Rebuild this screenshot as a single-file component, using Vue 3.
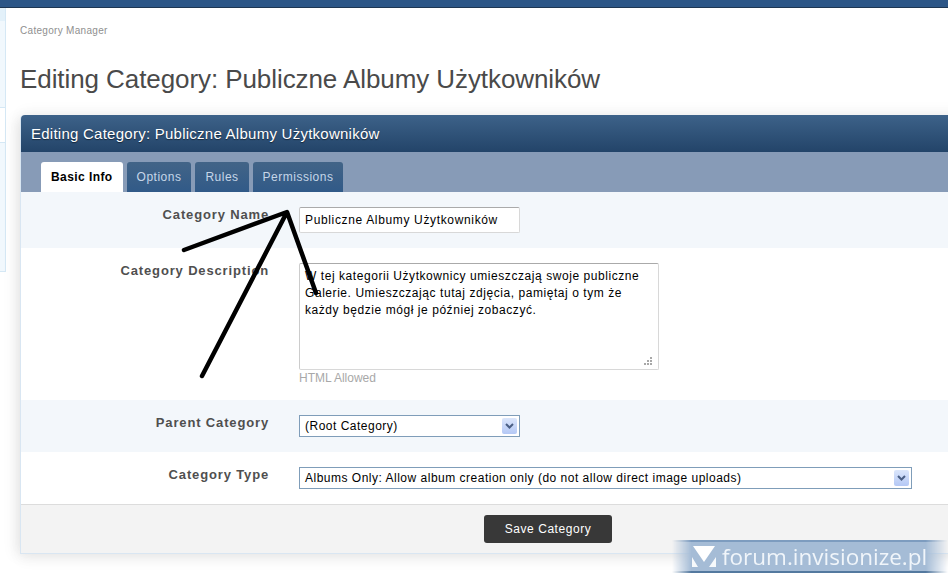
<script setup>
const tabs = [
  { name: 'Basic Info', active: true },
  { name: 'Options', active: false },
  { name: 'Rules', active: false },
  { name: 'Permissions', active: false }
]
const title = 'Editing Category: Publiczne Albumy Użytkowników'
const description = 'W tej kategorii Użytkownicy umieszczają swoje publiczne Galerie. Umieszczając tutaj zdjęcia, pamiętaj o tym że każdy będzie mógł je później zobaczyć.'
</script>

<template>
  <div class="page">
    <div class="topbar"></div>
    <div class="body">
      <aside class="side">
        <div class="side-a"></div>
        <div class="side-b"></div>
        <div class="side-c"></div>
        <div class="side-d"></div>
      </aside>
      <main class="main">
        <div class="crumb">Category Manager</div>
        <h1 class="heading">{{ title }}</h1>
        <section class="panel">
          <h2 class="panel-head">{{ title }}</h2>
          <div class="tabs">
            <div v-for="t in tabs" :key="t.name" class="tab" :class="{ active: t.active }">{{ t.name }}</div>
          </div>
          <div class="row row-name alt">
            <label class="label">Category Name</label>
            <div class="field"><input class="input" value="Publiczne Albumy Użytkowników" /></div>
          </div>
          <div class="row row-desc">
            <label class="label">Category Description</label>
            <div class="field">
              <div class="area-wrap">
                <textarea class="area" :value="description"></textarea>
                <svg class="grip" width="11" height="11" viewBox="0 0 11 11">
                  <g fill="#a8a8a8">
                    <rect x="8" y="1" width="2" height="2" />
                    <rect x="5" y="4" width="2" height="2" />
                    <rect x="8" y="4" width="2" height="2" />
                    <rect x="2" y="7" width="2" height="2" />
                    <rect x="5" y="7" width="2" height="2" />
                    <rect x="8" y="7" width="2" height="2" />
                  </g>
                </svg>
              </div>
              <div class="hint">HTML Allowed</div>
            </div>
          </div>
          <div class="row row-sel alt">
            <label class="label">Parent Category</label>
            <div class="field">
              <div class="select short">
                <span>(Root Category)</span>
                <span class="arrow">
                  <svg width="9" height="6" viewBox="0 0 9 6"><path d="M1 1l3.5 3.5L8 1" fill="none" stroke="#4a5f85" stroke-width="2" /></svg>
                </span>
              </div>
            </div>
          </div>
          <div class="row row-sel">
            <label class="label">Category Type</label>
            <div class="field">
              <div class="select long">
                <span>Albums Only: Allow album creation only (do not allow direct image uploads)</span>
                <span class="arrow">
                  <svg width="9" height="6" viewBox="0 0 9 6"><path d="M1 1l3.5 3.5L8 1" fill="none" stroke="#4a5f85" stroke-width="2" /></svg>
                </span>
              </div>
            </div>
          </div>
          <div class="foot">
            <button class="save">Save Category</button>
          </div>
        </section>
      </main>
    </div>

    <svg class="scribble" width="948" height="574" viewBox="0 0 948 574">
      <path d="M184 250L287 212L202 376M287 212L316 293" fill="none" stroke="#000" stroke-width="4.5" stroke-linecap="round" stroke-linejoin="round" />
    </svg>

    <div class="mark">
      <svg class="mark-logo" width="24" height="22" viewBox="0 0 24 22">
        <path d="M1 0h22L12 16z" fill="#fff" />
        <path d="M0 11l6 10H0zM24 11v10h-7z" fill="#fff" opacity=".9" />
      </svg>
      <span class="mark-text">forum.invisionize.pl</span>
    </div>
  </div>
</template>

<style>
html, body { margin: 0; background: #fff; }
</style>

<style scoped>
.page {
  position: relative;
  width: 948px;
  height: 574px;
  overflow: hidden;
  background: #fff;
  font-family: "Liberation Sans", Arial, sans-serif;
  font-size: 12px;
  color: #000;
}
.topbar {
  height: 7px;
  background: #2c5687;
  border-bottom: 1px solid #1d3652;
}
.body { display: flex; }
.side {
  width: 5px;
  border-right: 1px solid #d5e8f5;
  height: 263px;
  border-bottom: 1px solid #d5e8f5;
  display: flex;
  flex-direction: column;
  flex: none;
}
.side-a { height: 13px; background: #e3f1fa; }
.side-b { height: 86px; background: #f1f8fd; border-bottom: 1px solid #d5e8f5; }
.side-c { height: 34px; background: #fff; border-bottom: 1px solid #d5e8f5; }
.side-d { flex: 1; background: #f1f8fd; }
.main { flex: 1; min-width: 0; padding-left: 14px; }
.crumb {
  margin-top: 16px;
  font-size: 10px;
  line-height: 14px;
  letter-spacing: 0.3px;
  color: #8f8f8f;
}
.heading {
  margin: 25px 0 0;
  font-size: 26px;
  line-height: 32px;
  font-weight: 400;
  letter-spacing: -0.08px;
  color: #4a4a4a;
  white-space: nowrap;
}
.panel {
  width: 1054px;
  margin-top: 20px;
  border-left: 1px solid #d9e6f2;
  border-bottom: 1px solid #d9e6f2;
  border-top-left-radius: 4px;
  box-shadow: -6px 2px 14px rgba(0, 0, 0, 0.05), 0 -4px 14px rgba(0, 0, 0, 0.04), 0 6px 14px rgba(0, 0, 0, 0.05);
}
.panel-head {
  margin: 0;
  height: 37px;
  padding-left: 10px;
  background: linear-gradient(#3d6289, #234469);
  border-top-left-radius: 4px;
  font-size: 15px;
  font-weight: 400;
  line-height: 37px;
  letter-spacing: 0.25px;
  color: #fff;
  text-shadow: 0 1px 1px rgba(0, 0, 0, 0.5);
  white-space: nowrap;
}
.tabs {
  display: flex;
  gap: 4px;
  height: 30px;
  padding: 10px 0 0 20px;
  background: #879bb7;
}
.tab {
  height: 30px;
  padding: 0 10px;
  line-height: 30px;
  border-radius: 3px 3px 0 0;
  background: linear-gradient(#426487, #315a88);
  color: #c6d6e8;
  letter-spacing: 0.5px;
}
.tab.active {
  background: #fff;
  color: #000;
  font-weight: 700;
  letter-spacing: 0.42px;
}
.row { display: flex; }
.alt { background: #f3f7fb; }
.row-name { height: 56px; }
.row-desc { height: 152px; }
.row-sel { height: 52px; }
.label {
  width: 248px;
  flex: none;
  padding-top: 15px;
  text-align: right;
  font-size: 13px;
  font-weight: 700;
  line-height: 16px;
  color: #4f4f4f;
  letter-spacing: 0.85px;
  white-space: nowrap;
}
.field { padding: 15px 0 0 30px; }
.input {
  display: block;
  box-sizing: border-box;
  width: 221px;
  height: 26px;
  padding: 0 5px;
  border: 1px solid #d8d8d8;
  border-top-color: #aaa;
  border-left-color: #ccc;
  border-radius: 2px;
  background: #fff;
  font: 12px "Liberation Sans", Arial, sans-serif;
  letter-spacing: 0.65px;
  color: #000;
  outline: none;
}
.area-wrap { position: relative; width: 360px; height: 107px; }
.area {
  display: block;
  box-sizing: border-box;
  width: 360px;
  height: 107px;
  padding: 4px 5px;
  border: 1px solid #d8d8d8;
  border-top-color: #aaa;
  border-left-color: #ccc;
  border-radius: 2px;
  background: #fff;
  resize: none;
  font: 12px/17px "Liberation Sans", Arial, sans-serif;
  letter-spacing: 0.56px;
  color: #000;
  overflow: hidden;
  outline: none;
}
.grip { position: absolute; right: 6px; bottom: 3px; }
.hint {
  margin-top: 1px;
  font-size: 12px;
  line-height: 14px;
  color: #a8a8a8;
}
.select {
  position: relative;
  box-sizing: border-box;
  height: 22px;
  padding-left: 5px;
  border: 1px solid #7f9db9;
  background: #fff;
  line-height: 21px;
  letter-spacing: 0.5px;
  white-space: nowrap;
}
.short { width: 221px; }
.long { width: 613px; }
.arrow {
  position: absolute;
  top: 2px;
  right: 2px;
  width: 15px;
  height: 16px;
  display: flex;
  align-items: center;
  justify-content: center;
  border-radius: 2px;
  background: linear-gradient(#dbe6fb, #b4c8f5);
}
.foot {
  height: 49px;
  box-sizing: border-box;
  border-top: 1px solid #dcdcdc;
  background: #f3f3f3;
  display: flex;
  justify-content: center;
  padding-top: 10px;
}
.save {
  width: 128px;
  height: 28px;
  border: 0;
  border-radius: 3px;
  background: #383838;
  color: #fff;
  font: 12px "Liberation Sans", Arial, sans-serif;
  letter-spacing: 0.55px;
}
.scribble {
  position: absolute;
  left: 0;
  top: 0;
  pointer-events: none;
}
.mark {
  position: absolute;
  left: 672px;
  top: 540px;
  width: 276px;
  height: 33px;
  box-sizing: border-box;
  display: flex;
  align-items: center;
  gap: 6px;
  padding-left: 20px;
  background: #a5bcd6;
  border-top: 2px solid #7d9cbf;
  border-bottom: 2px solid #54799f;
  -webkit-mask-image: linear-gradient(90deg, transparent, #000 7%, #000 92%, transparent);
  mask-image: linear-gradient(90deg, transparent, #000 7%, #000 92%, transparent);
}
.mark-logo { flex: none; }
.mark-text {
  font-family: "Open Sans", sans-serif;
  font-size: 22.5px;
  line-height: 28px;
  color: #f0f5fa;
  white-space: nowrap;
}
</style>
